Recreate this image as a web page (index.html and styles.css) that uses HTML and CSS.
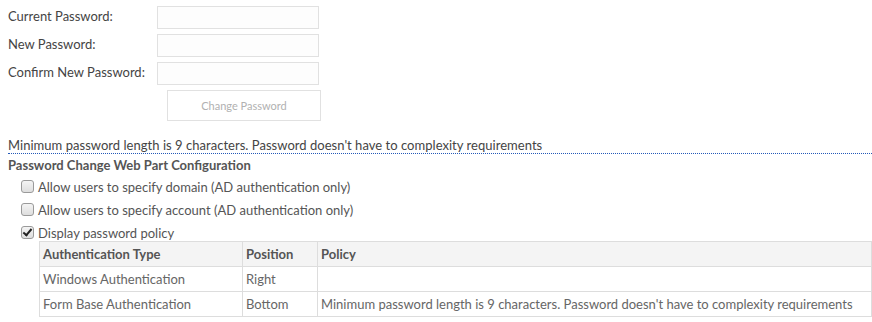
FILE: index.html
```html
<!DOCTYPE html>
<html lang="en">

<head>
    <meta charset="UTF-8">
    <title>Change Password</title>
    <link rel="stylesheet" href="styles.css">
</head>

<body>
    <div class="page">
        <div class="pwd-form">
            <label class="pwd-label" for="curPwd">Current Password:</label>
            <div class="pwd-cell"><input type="password" id="curPwd" class="pwd-input"></div>
            <label class="pwd-label" for="newPwd">New Password:</label>
            <div class="pwd-cell"><input type="password" id="newPwd" class="pwd-input"></div>
            <label class="pwd-label" for="confPwd">Confirm New Password:</label>
            <div class="pwd-cell"><input type="password" id="confPwd" class="pwd-input"></div>
            <div></div>
            <div class="btn-cell"><button class="change-btn" disabled>Change Password</button></div>
        </div>

        <div class="policy-line">Minimum password length is 9 characters. Password doesn't have to complexity requirements</div>

        <div class="config-title">Password Change Web Part Configuration</div>

        <div class="config-options">
            <label class="opt"><input type="checkbox" class="opt-check"> Allow users to specify domain (AD authentication only)</label>
            <label class="opt"><input type="checkbox" class="opt-check"> Allow users to specify account (AD authentication only)</label>
            <label class="opt"><input type="checkbox" class="opt-check" checked> Display password policy</label>
        </div>

        <table class="policy-table">
            <tr>
                <th class="col-type">Authentication Type</th>
                <th class="col-pos">Position</th>
                <th>Policy</th>
            </tr>
            <tr>
                <td>Windows Authentication</td>
                <td>Right</td>
                <td></td>
            </tr>
            <tr>
                <td>Form Base Authentication</td>
                <td>Bottom</td>
                <td>Minimum password length is 9 characters. Password doesn't have to complexity requirements</td>
            </tr>
        </table>
    </div>
</body>

</html>
```

FILE: styles.css
```css
body {
    margin: 0;
    font-family: Lato, "Open Sans", sans-serif;
    font-size: 13px;
    color: #444;
    overflow: hidden;
}

.page {
    padding-left: 8px;
}

.pwd-form {
    display: grid;
    grid-template-columns: 149px auto;
    grid-auto-rows: 28px;
    padding-top: 3px;
    width: 320px;
}

.pwd-label {
    display: flex;
    align-items: center;
    padding-bottom: 2px;
    color: #444;
}

.pwd-cell {
    display: flex;
    align-items: center;
}

.pwd-input {
    box-sizing: border-box;
    width: 162px;
    height: 23px;
    margin: 0;
    border: 1px solid #e1e1e1;
    background-color: #fdfdfd;
}

.btn-cell {
    padding-top: 3px;
}

.change-btn {
    box-sizing: border-box;
    width: 154px;
    height: 31px;
    margin-left: 10px;
    font-family: inherit;
    font-size: 11px;
    color: #b1b1b1;
    background-color: #fff;
    border: 1px solid #e1e1e1;
}

.policy-line {
    margin-top: 22px;
    line-height: 16px;
    letter-spacing: 0.03px;
    color: #444;
    border-bottom: 1px dotted #2459b8;
}

.config-title {
    margin-top: 2px;
    line-height: 18px;
    font-weight: bold;
    color: #555;
}

.config-options {
    display: flex;
    flex-direction: column;
    padding-left: 13px;
    margin-top: 1px;
}

.opt {
    display: flex;
    align-items: center;
    height: 23px;
    color: #555;
}

.opt-check {
    appearance: none;
    -webkit-appearance: none;
    position: relative;
    box-sizing: border-box;
    width: 13px;
    height: 13px;
    margin: 0 4px 0 0;
    border: 1px solid #9a9a9a;
    border-radius: 3px;
    background: linear-gradient(#f4f4f4, #dedede);
}

.opt-check:checked::after {
    content: "";
    position: absolute;
    left: 3px;
    top: 0px;
    width: 3px;
    height: 7px;
    border: solid #222;
    border-width: 0 2px 2px 0;
    transform: rotate(40deg);
}

.policy-table {
    margin-left: 31px;
    margin-top: -3px;
    width: calc(100% - 31px);
    border-collapse: collapse;
}

.policy-table th,
.policy-table td {
    height: 24px;
    padding: 0 3px;
    text-align: left;
    border: 1px solid #ddd;
    white-space: nowrap;
}

.policy-table th {
    background-color: #f4f4f4;
    color: #555;
}

.policy-table td {
    color: #666;
}

.col-type {
    width: 196px;
}

.col-pos {
    width: 68px;
}
```
